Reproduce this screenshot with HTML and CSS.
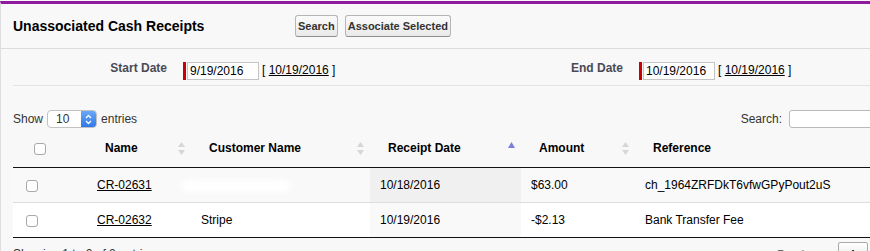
FILE: index.html
```html
<!DOCTYPE html>
<html>
    <head>
        <meta charset="utf-8">
        <title>Unassociated Cash Receipts</title>
        <link rel="stylesheet" href="styles.css">
    </head>
    <body>
        <div class="block">
            <div class="blockHead">
                <h2 class="title">Unassociated Cash Receipts</h2>
                <div class="btns">
                    <button class="btn">Search</button>
                    <button class="btn">Associate Selected</button>
                </div>
            </div>

            <div class="blockBody">
                <!-- date filters -->
                <div class="dates">
                    <div class="lbl">Start Date</div>
                    <div class="field">
                        <span class="req"></span>
                        <input class="dateIn" type="text" value="9/19/2016">
                        <span class="today">[&nbsp;<a href="#">10/19/2016</a>&nbsp;]</span>
                    </div>
                    <div class="lbl">End Date</div>
                    <div class="field">
                        <span class="req"></span>
                        <input class="dateIn" type="text" value="10/19/2016">
                        <span class="today">[&nbsp;<a href="#">10/19/2016</a>&nbsp;]</span>
                    </div>
                </div>

                <!-- table controls -->
                <div class="controls">
                    <div class="len">
                        Show
                        <div class="sel">
                            <span class="selVal">10</span>
                            <span class="selArrow">
                                <svg width="7" height="11" viewBox="0 0 7 11">
                                    <path d="M1 4 L3.5 1.5 L6 4 M1 7 L3.5 9.5 L6 7" fill="none" stroke="#fff" stroke-width="1.3"/>
                                </svg>
                            </span>
                        </div>
                        entries
                    </div>
                    <div class="filter">
                        Search:
                        <input class="filterIn" type="text">
                    </div>
                </div>

                <table class="grid">
                    <colgroup>
                        <col style="width:74px">
                        <col style="width:104px">
                        <col style="width:179px">
                        <col style="width:151px">
                        <col style="width:114px">
                        <col>
                    </colgroup>
                    <thead>
                        <tr>
                            <th class="chkCol"><input class="chk" type="checkbox"></th>
                            <th><div class="thIn">Name<svg class="sort" width="7" height="13" viewBox="0 0 7 13"><path d="M3.5 0 L7 5 L0 5 Z M0 8 L7 8 L3.5 13 Z" fill="#d6d6d6"/></svg></div></th>
                            <th><div class="thIn">Customer Name<svg class="sort" width="7" height="13" viewBox="0 0 7 13"><path d="M3.5 0 L7 5 L0 5 Z M0 8 L7 8 L3.5 13 Z" fill="#d6d6d6"/></svg></div></th>
                            <th><div class="thIn">Receipt Date<svg class="sort" width="7" height="13" viewBox="0 0 7 13"><path d="M3.5 0 L7 6 L0 6 Z" fill="#7d7ddf"/></svg></div></th>
                            <th><div class="thIn">Amount<svg class="sort" width="7" height="13" viewBox="0 0 7 13"><path d="M3.5 0 L7 5 L0 5 Z M0 8 L7 8 L3.5 13 Z" fill="#d6d6d6"/></svg></div></th>
                            <th><div class="thIn">Reference<svg class="sort" width="7" height="13" viewBox="0 0 7 13"><path d="M3.5 0 L7 5 L0 5 Z M0 8 L7 8 L3.5 13 Z" fill="#d6d6d6"/></svg></div></th>
                        </tr>
                    </thead>
                    <tbody>
                        <tr class="odd">
                            <td><input class="chk" type="checkbox"></td>
                            <td><a href="#">CR-02631</a></td>
                            <td><span class="smudge"></span></td>
                            <td class="sorted">10/18/2016</td>
                            <td>$63.00</td>
                            <td>ch_1964ZRFDkT6vfwGPyPout2uS</td>
                        </tr>
                        <tr class="even">
                            <td><input class="chk" type="checkbox"></td>
                            <td><a href="#">CR-02632</a></td>
                            <td>Stripe</td>
                            <td class="sorted">10/19/2016</td>
                            <td>-$2.13</td>
                            <td>Bank Transfer Fee</td>
                        </tr>
                    </tbody>
                </table>

                <div class="foot">
                    <div class="info">Showing 1 to 2 of 2 entries</div>
                    <div class="paging">
                        <span class="pgBtn off">Previous</span>
                        <span class="pgBtn cur">1</span>
                        <span class="pgBtn off">Next</span>
                    </div>
                </div>
            </div>
        </div>
    </body>
</html>
```

FILE: styles.css
```css
body,html{
    margin:0px;
    padding:0px;
    background:#f8f8f8;
    overflow:hidden;
}
body{
    padding-top:1px;
    font-family:"Liberation Sans", Arial, sans-serif;
    font-size:12px;
    color:#000;
}
a{
    color:#000;
    text-decoration:underline;
}
.block{
    width:930px;
    border-top:3px solid #8f199f;
    border-left:1px solid #dedede;
    background:#f8f8f8;
}
.blockHead{
    display:flex;
    align-items:center;
    height:44px;
    padding-left:12px;
    border-bottom:1px solid #dcdcdc;
}
.title{
    flex:0 0 282px;
    margin:0px;
    font-size:14px;
    font-weight:bold;
}
.btns{
    display:flex;
    gap:7px;
}
.btn{
    height:22px;
    padding:0px 2px;
    font-family:"Liberation Sans", Arial, sans-serif;
    font-size:11px;
    font-weight:bold;
    color:#333;
    background:linear-gradient(#fbfbfb, #e9e9e9);
    border:1px solid #b5b5b5;
    border-bottom-color:#8f8f8f;
    border-radius:3px;
}
.blockBody{
    margin:0px 12px;
}
.dates{
    display:grid;
    grid-template-columns:164px 292px 164px 285px;
    padding:13px 0px 5px 0px;
    border-bottom:1px solid #e3e3e3;
}
.lbl{
    padding:0px 10px 0px 0px;
    text-align:right;
    font-weight:bold;
    color:#4a4a56;
    line-height:13px;
}
.field{
    display:flex;
    align-items:center;
    padding-left:6px;
}
.req{
    width:3px;
    height:18px;
    background:#c00;
    margin-right:1px;
}
.dateIn{
    box-sizing:border-box;
    width:72px;
    height:18px;
    padding:0px 2px;
    border:1px solid #c4c4c4;
    font-family:"Liberation Sans", Arial, sans-serif;
    font-size:12px;
    background:#fff;
}
.today{
    margin-left:3px;
    font-size:12px;
    margin-top:-2px;
}
.controls{
    display:flex;
    justify-content:space-between;
    align-items:center;
    padding-top:24px;
    height:18px;
}
.len, .filter{
    display:flex;
    align-items:center;
    gap:4px;
    color:#333;
}
.filter{
    gap:7px;
}
.sel{
    display:flex;
    box-sizing:border-box;
    width:50px;
    height:18px;
    background:#fff;
    border:1px solid #c2c2c2;
    border-radius:4px;
    overflow:hidden;
}
.selVal{
    flex:1;
    padding-left:8px;
    line-height:16px;
}
.selArrow{
    display:flex;
    align-items:center;
    justify-content:center;
    width:15px;
    background:linear-gradient(#6aa9f7, #2f78e8);
}
.filterIn{
    box-sizing:border-box;
    width:130px;
    height:18px;
    border:1px solid #b9b9b9;
    border-radius:3px;
    background:#fff;
}
.grid{
    width:100%;
    margin-top:2px;
    border-collapse:collapse;
    table-layout:fixed;
}
.grid th{
    padding:10px 6px 10px 18px;
    text-align:left;
    font-weight:bold;
    line-height:17px;
    border-bottom:1px solid #111;
}
.thIn{
    display:flex;
    justify-content:space-between;
    align-items:center;
}
.grid td{
    padding:8px 10px;
    line-height:18px;
    white-space:nowrap;
}
.grid tbody tr + tr td{
    border-top:1px solid #ddd;
}
.grid tbody tr:last-child td{
    border-bottom:1px solid #111;
}
.odd td{
    background:#f9f9f9;
}
.even td{
    background:#fff;
}
.odd td.sorted{
    background:#f0f0f0;
}
.even td.sorted{
    background:#f9f9f9;
}
.chk{
    -webkit-appearance:none;
    appearance:none;
    box-sizing:border-box;
    width:12px;
    height:12px;
    margin:0px 0px 0px 3px;
    vertical-align:middle;
    background:#fff;
    border:1px solid #a8a8a8;
    border-radius:3px;
}
.smudge{
    display:inline-block;
    width:110px;
    height:12px;
    margin-left:-20px;
    vertical-align:middle;
    background:#fff;
    border-radius:6px;
    filter:blur(3px);
}
.foot{
    display:flex;
    justify-content:space-between;
}
.info{
    padding-top:9px;
    color:#333;
}
.paging{
    padding-top:4px;
    display:flex;
}
.pgBtn{
    padding:5px 11px;
    margin-left:2px;
    border:1px solid transparent;
    border-radius:2px;
    line-height:14px;
}
.off{
    color:#666;
}
.cur{
    border-color:#aaa;
    background:linear-gradient(#fff, #dcdcdc);
}
```
